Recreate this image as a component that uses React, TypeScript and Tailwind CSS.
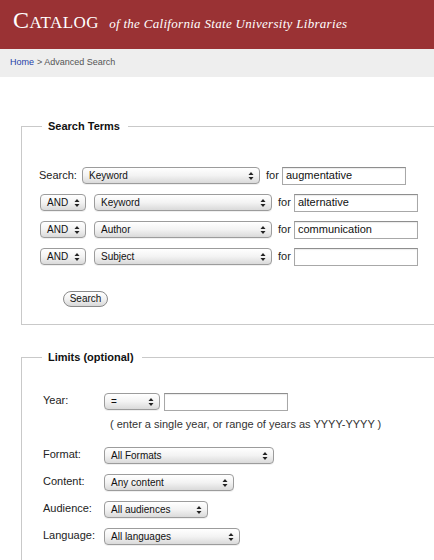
import React from 'react';

type SelectProps = {
  value: string;
  className: string;
};

// mac-style popup button, drawn with divs so it looks the same everywhere
function PopupSelect({ value, className }: SelectProps) {
  return (
    <div
      className={`relative flex h-[17px] shrink-0 items-center rounded-[4px] border border-[#9c9c9c] bg-gradient-to-b from-white via-[#f3f3f3] to-[#dadada] pl-[6px] text-[10px] leading-none text-[#111] shadow-[0_1px_0_rgba(0,0,0,0.06)] ${className}`}
    >
      <span>{value}</span>
      <svg
        className="absolute right-[5px] top-1/2 -translate-y-1/2"
        width="6"
        height="9"
        viewBox="0 0 6 9"
      >
        <path d="M3 0.5 L5.5 3.5 L0.5 3.5 Z" fill="#222" />
        <path d="M3 8.5 L5.5 5.5 L0.5 5.5 Z" fill="#222" />
      </svg>
    </div>
  );
}

function TextBox({ value, className }: { value: string; className: string }) {
  return (
    <div
      className={`flex h-[18px] shrink-0 items-center border border-[#a8a8a8] border-t-[#8e8e8e] bg-white pl-[3px] text-[11px] leading-none text-[#111] shadow-[inset_0_1px_1px_rgba(0,0,0,0.08)] ${className}`}
    >
      {value}
    </div>
  );
}

const TERM_ROWS = [
  { field: 'Keyword', term: 'alternative' },
  { field: 'Author', term: 'communication' },
  { field: 'Subject', term: '' },
];

export default function App() {
  return (
    <div className="h-[560px] overflow-hidden bg-white font-['Liberation_Sans',Arial,sans-serif] text-[#222]">
      {/* Header band */}
      <div className="flex h-[49px] items-baseline bg-[#9a3234] pl-[13px] pt-[8px] text-white">
        <span className="font-['Liberation_Serif','Times_New_Roman',serif] text-[24px] leading-none tracking-[0.5px] [font-variant:small-caps]">
          Catalog
        </span>
        <span className="ml-[10px] font-['Liberation_Serif','Times_New_Roman',serif] text-[13px] italic leading-none tracking-[0.3px]">
          of the California State University Libraries
        </span>
      </div>

      {/* Breadcrumb */}
      <div className="flex h-[28px] items-center bg-[#eeeeee] pl-[10px] text-[9px] text-[#555]">
        <a href="#" className="text-[#1f3fa8]">Home</a>
        <span className="ml-[3px]">&gt; Advanced Search</span>
      </div>

      {/* Search Terms */}
      <fieldset className="ml-[21px] mt-[43px] border border-r-0 border-[#c9c9c9] pb-[17px]">
        <legend className="ml-[20px] pl-[6px] pr-[8px] text-[11px] font-bold leading-[13px] text-[#111]">
          Search Terms
        </legend>

        <div className="mt-[29px] flex flex-col pl-[17px]">
          <div className="flex h-[27px] items-center text-[11px]">
            <span className="w-[43px] text-[#222]">Search:</span>
            <PopupSelect value="Keyword" className="w-[178px]" />
            <span className="ml-[6px] w-[16px] text-[#222]">for</span>
            <TextBox value="augmentative" className="w-[124px]" />
          </div>
          {TERM_ROWS.map((row) => (
            <div key={row.field} className="flex h-[27px] items-center pl-[1px] text-[11px]">
              <PopupSelect value="AND" className="w-[46px]" />
              <PopupSelect value={row.field} className="ml-[8px] w-[178px]" />
              <span className="ml-[6px] w-[16px] text-[#222]">for</span>
              <TextBox value={row.term} className="w-[124px]" />
            </div>
          ))}
        </div>

        <button className="ml-[41px] mt-[21px] flex h-[16px] w-[45px] items-center justify-center rounded-full border border-[#8a8a8a] bg-gradient-to-b from-white via-[#f2f2f2] to-[#d8d8d8] text-[10px] leading-none text-[#111]">
          Search
        </button>
      </fieldset>

      {/* Limits */}
      <fieldset className="ml-[21px] mt-[26px] border border-r-0 border-b-0 border-[#c9c9c9] pb-[40px]">
        <legend className="ml-[20px] pl-[6px] pr-[8px] text-[11px] font-bold leading-[13px] text-[#111]">
          Limits (optional)
        </legend>

        <div className="mt-[29px] pl-[21px] text-[11px]">
          <div className="flex items-start">
            <span className="w-[61px] leading-[14px]">Year:</span>
            <PopupSelect value="=" className="w-[56px]" />
            <TextBox value="" className="ml-[4px] w-[124px]" />
          </div>
          <p className="ml-[67px] mt-[7px] leading-[12px] text-[#333]">
            ( enter a single year, or range of years as YYYY-YYYY )
          </p>

          <div className="mt-[17px] flex flex-col gap-[10px]">
            <div className="flex items-start">
              <span className="w-[61px] leading-[14px]">Format:</span>
              <PopupSelect value="All Formats" className="w-[170px]" />
            </div>
            <div className="flex items-start">
              <span className="w-[61px] leading-[14px]">Content:</span>
              <PopupSelect value="Any content" className="w-[130px]" />
            </div>
            <div className="flex items-start">
              <span className="w-[61px] leading-[14px]">Audience:</span>
              <PopupSelect value="All audiences" className="w-[104px]" />
            </div>
            <div className="flex items-start">
              <span className="w-[61px] leading-[14px]">Language:</span>
              <PopupSelect value="All languages" className="w-[136px]" />
            </div>
          </div>
        </div>
      </fieldset>
    </div>
  );
}
